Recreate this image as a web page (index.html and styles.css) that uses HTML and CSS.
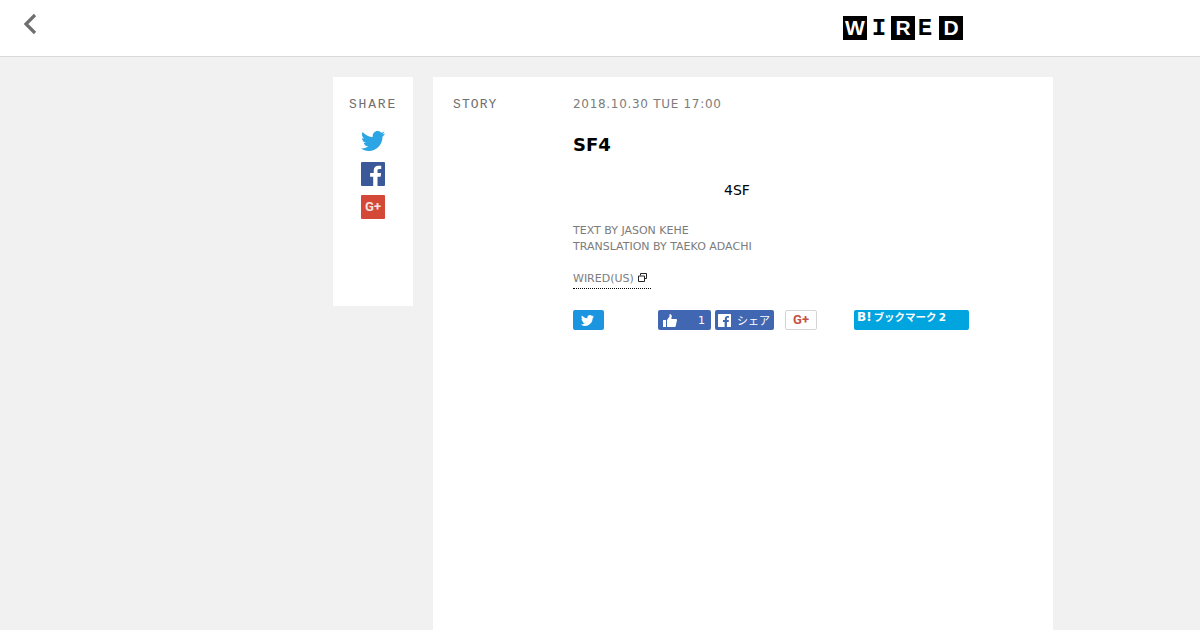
FILE: index.html
```html
<!DOCTYPE html>
<html lang="ja">
<head>
<meta charset="utf-8">
<title>WIRED</title>
<link rel="stylesheet" href="styles.css">
</head>
<body>
<header class="top">
  <a class="back" href="#" aria-label="back">
    <svg width="20" height="26" viewBox="0 0 20 26"><path d="M15 4 6 13 15 22" fill="none" stroke="#6f6f6f" stroke-width="3.2"/></svg>
  </a>
  <div class="logo">
    <span class="lg dark">W</span><span class="lg light">I</span><span class="lg dark">R</span><span class="lg light">E</span><span class="lg dark">D</span>
  </div>
</header>
<div class="page">
  <aside class="share">
    <div class="slab">SHARE</div>
    <svg class="ic tw" width="24" height="20" viewBox="0 0 24 20"><path fill="#2ba5e3" d="M24 2.400c-.9.4-1.800.7-2.800.8 1-.6 1.800-1.600 2.200-2.700-1 .6-2 1-3.100 1.200C19.300.7 18 0 16.600 0c-2.700 0-4.900 2.200-4.900 4.900 0 .4 0 .8.100 1.100C7.700 5.800 4.100 3.900 1.700.9 1.200 1.600 1 2.500 1 3.400c0 1.700.9 3.200 2.200 4.100-.8 0-1.600-.2-2.200-.6v.1c0 2.400 1.700 4.400 3.900 4.800-.4.100-.8.200-1.300.2-.3 0-.6 0-.9-.1.600 2 2.400 3.400 4.600 3.400-1.700 1.300-3.800 2.100-6.100 2.100-.4 0-.8 0-1.200-.1C2.200 19.200 4.800 20 7.500 20c9.100 0 14-7.500 14-14v-.6c1-.7 1.800-1.600 2.500-3z"/></svg>
    <svg class="ic fb" width="24" height="24" viewBox="0 0 24 24"><rect width="24" height="24" rx="1" fill="#3b5998"/><path fill="#fff" d="M16.500 24v-9.300h3.100l.5-3.600h-3.600V8.800c0-1 .3-1.800 1.800-1.800h1.900V3.800c-.3 0-1.500-.1-2.800-.1-2.800 0-4.700 1.700-4.700 4.800v2.600H9.100v3.600h3.100V24z"/></svg>
    <span class="gbox">G+</span>
  </aside>
  <main class="card">
    <div class="slab story">STORY</div>
    <article class="body">
      <div class="date">2018.10.30 TUE 17:00</div>
      <h1 class="title">SF4</h1>
      <p class="lead">4SF</p>
      <p class="credit">TEXT BY JASON KEHE<br>TRANSLATION BY TAEKO ADACHI</p>
      <a class="source" href="#">WIRED(US)<svg class="ext" width="9" height="9" viewBox="0 0 9 9"><path d="M2.500 2.500V.5h6v5h-2M.5 3h6v5.500h-6z" fill="none" stroke="#222"/></svg></a>
      <div class="btns">
        <a class="btn b-tw"><svg width="13" height="11" viewBox="0 0 24 20"><path fill="#fff" d="M24 2.400c-.9.4-1.800.7-2.800.8 1-.6 1.800-1.600 2.200-2.700-1 .6-2 1-3.100 1.200C19.300.7 18 0 16.600 0c-2.700 0-4.900 2.200-4.900 4.900 0 .4 0 .8.100 1.100C7.700 5.800 4.100 3.900 1.700.9 1.200 1.600 1 2.500 1 3.400c0 1.700.9 3.200 2.200 4.100-.8 0-1.600-.2-2.200-.6v.1c0 2.400 1.700 4.400 3.900 4.800-.4.100-.8.200-1.300.2-.3 0-.6 0-.9-.1.600 2 2.400 3.400 4.600 3.400-1.700 1.300-3.800 2.100-6.100 2.100-.4 0-.8 0-1.200-.1C2.200 19.200 4.800 20 7.500 20c9.100 0 14-7.500 14-14v-.6c1-.7 1.800-1.600 2.500-3z"/></svg></a>
        <a class="btn b-like"><svg width="14" height="13" viewBox="0 0 14 13"><path fill="#fff" d="M0 6h3v7H0zM4 6l2.500-3.500V0c1.500 0 2.300 1 2.300 2.300L8.300 5H13c.7 0 1 .6 1 1.200L12.700 12c-.1.600-.6 1-1.200 1H4z"/></svg><span>1</span></a>
        <a class="btn b-fb"><svg width="13" height="13" viewBox="0 0 24 24"><rect width="24" height="24" rx="1" fill="#fff"/><path fill="#4267b2" d="M16.500 24v-9.300h3.100l.5-3.600h-3.600V8.800c0-1 .3-1.800 1.800-1.800h1.900V3.800c-.3 0-1.500-.1-2.800-.1-2.800 0-4.700 1.700-4.700 4.800v2.600H9.100v3.600h3.100V24z"/></svg><span>シェア</span></a>
        <a class="btn b-g">G+</a>
        <a class="btn b-h"><b>B!</b><span>ブックマーク</span><span class="hn">2</span></a>
      </div>
    </article>
  </main>
</div>
</body>
</html>
```

FILE: styles.css
```css
* { box-sizing: border-box; }
html, body { margin: 0; height: 630px; overflow: hidden; }
body {
  background: #f1f1f1;
  font-family: "DejaVu Sans", "Noto Sans CJK JP", sans-serif;
  color: #000;
}
a { color: inherit; text-decoration: none; }

.top {
  height: 57px;
  background: #fff;
  border-bottom: 1px solid #d9d9d9;
  display: flex;
  padding-left: 20px;
}
.back { width: 20px; height: 26px; margin-top: 11px; display: block; }
.logo { display: flex; margin-left: 803px; margin-top: 16px; height: 24px; }
.lg { font-weight: 700; text-align: center; height: 24px; }
.dark {
  width: 24px;
  background: #000;
  color: #fff;
  font-family: "Liberation Sans", sans-serif;
  font-size: 21px;
  line-height: 24px;
}
.light {
  width: 12px;
  margin: 0 6px;
  color: #000;
  font-family: "Liberation Mono", monospace;
  font-size: 24px;
  line-height: 26px;
  display: flex;
  justify-content: center;
}
.light:nth-child(4) { margin: 0 8px 0 4px; }

.page { display: flex; gap: 20px; padding: 20px 0 0 333px; }
.share {
  width: 80px;
  height: 229px;
  background: #fff;
  display: flex;
  flex-direction: column;
  align-items: center;
  padding-top: 20px;
}
.slab {
  font-family: "Liberation Mono", monospace;
  font-size: 13px;
  line-height: 16px;
  letter-spacing: 1.800px;
  color: #6f6f6f;
}
.ic { display: block; }
.tw { margin-top: 18px; }
.fb { margin-top: 11px; }
.gbox {
  margin-top: 9px;
  width: 24px;
  height: 24px;
  background: #d34836;
  border-radius: 1px;
  color: #f3e3e0;
  font: 700 13px/24px Roboto, sans-serif;
  text-align: center;
}
.card {
  width: 620px;
  height: 553px;
  background: #fff;
  display: flex;
  padding: 20px;
}
.slab.story { width: 120px; flex: none; letter-spacing: 1.100px; }
.body { flex: 1; }
.date { font-size: 12px; line-height: 14px; letter-spacing: .7px; color: #7c7c7c; }
.title { margin: 21px 0 0; font-size: 18px; line-height: 26px; font-weight: 700; color: #000; }
.lead { margin: 23px 0 0 151px; font-size: 14px; line-height: 18px; }
.credit { margin: 24px 0 0; font-size: 11px; line-height: 16px; color: #7c7c7c; }
.source {
  display: inline-block;
  margin-top: 16px;
  font-size: 11px;
  line-height: 16px;
  height: 18px;
  width: 78px;
  color: #7c7c7c;
  border-bottom: 1px dotted #000;
}
.ext { margin-left: 4px; }
.btns { display: flex; margin-top: 21px; height: 20px; }
.btn {
  height: 20px;
  border-radius: 2px;
  display: flex;
  align-items: center;
  color: #fff;
  font-size: 11px;
}
.b-tw { width: 31px; background: #1b95e0; justify-content: center; padding-right: 3px; }
.b-like { width: 53px; background: #4267b2; margin-left: 54px; padding: 0 6px 0 5px; justify-content: space-between; }
.b-fb { width: 59px; background: #4267b2; margin-left: 4px; padding: 0 4px 0 3px; justify-content: space-between; }
.b-g {
  width: 32px;
  margin-left: 11px;
  background: #fff;
  border: 1px solid #d5d5d5;
  color: #c5523f;
  font: 700 13px/18px Roboto, sans-serif;
  justify-content: center;
}
.b-h {
  width: 115px;
  margin-left: 37px;
  background: #00a4de;
  align-items: flex-start;
  padding: 0 3px;
  font-size: 10.500px;
  line-height: 14px;
  font-weight: 700;
  gap: 2px;
}
.b-h b { font-size: 12px; }
.hn { margin-left: 0; }
```
